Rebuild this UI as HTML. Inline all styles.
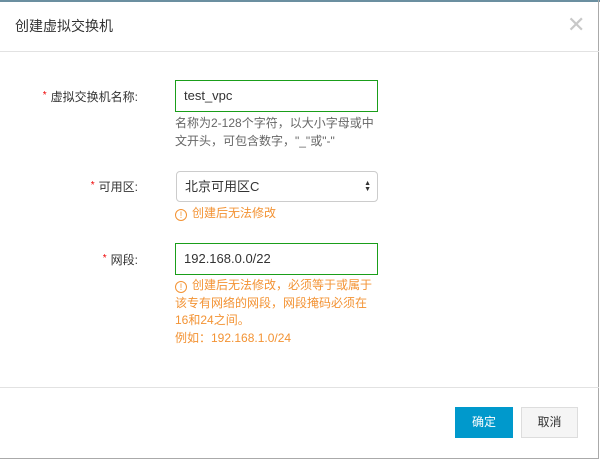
<!DOCTYPE html><html><head><meta charset="utf-8"><style>
*{margin:0;padding:0;box-sizing:border-box}
body{width:600px;height:460px;background:#fff;font-family:"Liberation Sans","Noto Sans CJK SC",sans-serif;position:relative;overflow:hidden;color:#333}
.top{position:absolute;left:0;top:0;width:600px;height:2px;background:#6b8fa0}
.frame{position:absolute;left:0;top:0;width:599px;height:459px;border-right:1px solid #aaa;border-bottom:1px solid #aaa}
.title{position:absolute;left:15px;top:16px;font-size:14px;color:#333}
.x{position:absolute;left:567px;top:12px;font-size:22px;color:#c8c8c8;font-weight:300}
.hl{position:absolute;left:0;width:599px;height:1px;background:#e2e2e2}
.lab{position:absolute;right:462px;font-size:12px;color:#333}
.lab i{color:#e00;font-style:normal;font-size:10px;margin-right:4px;position:relative;top:-3px}
.inp{position:absolute;left:175px;width:203px;height:32px;border:1px solid #1a9e1a;font-size:13px;padding:0 8px;line-height:30px}
.sel{position:absolute;left:176px;top:171px;width:202px;height:31px;border:1px solid #ccc;border-radius:4px;font-size:13px;padding:0 8px;line-height:29px}
.arr{position:absolute;right:6px;top:9px;font-size:7px;line-height:6px;color:#333}
.help{position:absolute;left:175px;font-size:12px;line-height:17.5px;color:#666}
.or{color:#f39334}
.ic{display:inline-block;width:12px;height:12px;border:1px solid #f39334;border-radius:50%;font-size:9px;line-height:10px;text-align:center;vertical-align:-1px;margin-right:5px}
.btn{position:absolute;top:407px;height:31px;font-size:12px;line-height:31px;text-align:center}
</style></head><body>
<div class="top"></div><div class="frame"></div>
<div class="title">创建虚拟交换机</div>
<div class="x">✕</div>
<div class="hl" style="top:51px"></div>
<div class="lab" style="top:88px"><i>*</i>虚拟交换机名称:</div>
<div class="inp" style="top:80px">test_vpc</div>
<div class="help" style="top:115px">名称为2-128个字符，以大小字母或中<br>文开头，可包含数字，"_"或"-"</div>
<div class="lab" style="top:178px"><i>*</i>可用区:</div>
<div class="sel">北京可用区C<div class="arr">▲<br>▼</div></div>
<div class="help or" style="top:205px"><span class="ic">!</span>创建后无法修改</div>
<div class="lab" style="top:251px"><i>*</i>网段:</div>
<div class="inp" style="top:243px">192.168.0.0/22</div>
<div class="help or" style="top:277px"><span class="ic">!</span>创建后无法修改，必须等于或属于<br>该专有网络的网段，网段掩码必须在<br>16和24之间。<br>例如：192.168.1.0/24</div>
<div class="hl" style="top:387px"></div>
<div class="btn" style="left:455px;width:58px;background:#0099cc;color:#fff">确定</div>
<div class="btn" style="left:521px;width:57px;background:#f5f5f5;border:1px solid #ddd;color:#333;line-height:29px">取消</div>
</body></html>
